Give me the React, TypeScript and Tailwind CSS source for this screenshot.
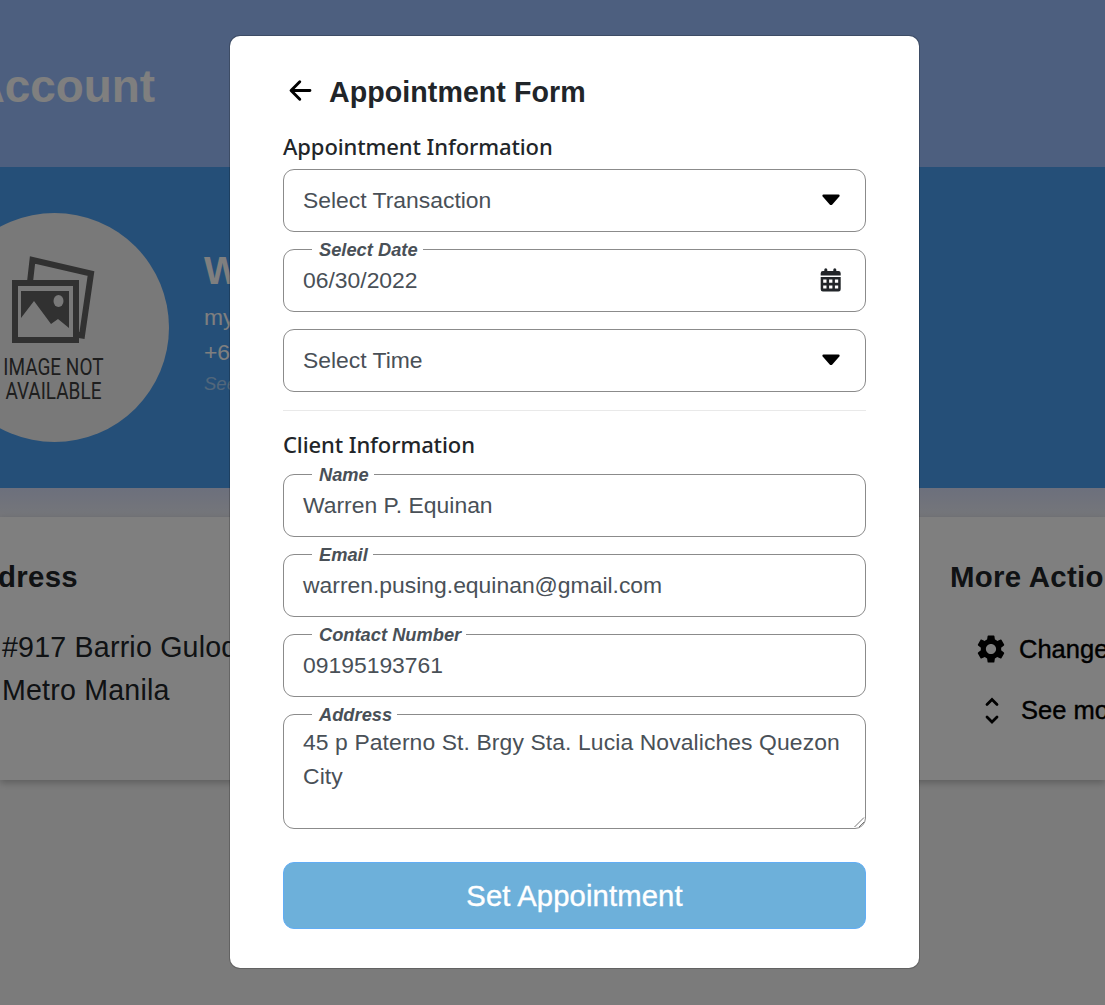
import type { ReactNode } from "react";
import { IoArrowBack } from "react-icons/io5";
import { MdSettings } from "react-icons/md";

function Caret() {
  return (
    <svg width="18" height="12" viewBox="0 0 18 12" className="mr-[2px] mb-[2px] shrink-0 fill-black">
      <path d="M1.500 0.500 H16.500 Q18.200 0.800 17.300 2.400 L10.300 10.500 Q9 11.700 7.700 10.500 L0.700 2.400 Q-0.200 0.800 1.500 0.500 Z" />
    </svg>
  );
}

function Calendar() {
  return (
    <svg width="22" height="24" viewBox="0 0 22 24" className="mb-px shrink-0 fill-[#212529]">
      <path d="M4.300 3 V1.800 Q4.300 0.300 5.800 0.300 T7.300 1.800 V3 H13.300 V1.800 Q13.300 0.300 14.800 0.300 T16.300 1.800 V3 H18.500 Q20.700 3 20.700 5.200 V7.600 H0.700 V5.200 Q0.700 3 2.900 3 Z" />
      <path
        fillRule="evenodd"
        d="M0.700 9 H20.700 V21.300 Q20.700 23.500 18.500 23.500 H2.900 Q0.700 23.500 0.700 21.300 Z M3.200 11.600 V14.700 H6.500 V11.600 Z M9.100 11.600 V14.700 H12.400 V11.600 Z M14.900 11.600 V14.700 H18.200 V11.600 Z M3.200 17.400 V20.500 H6.500 V17.400 Z M9.100 17.400 V20.500 H12.400 V17.400 Z M14.900 17.400 V20.500 H18.200 V17.400 Z"
      />
    </svg>
  );
}

function Field({ label, value, icon }: { label?: string; value: string; icon?: ReactNode }) {
  return (
    <div className="relative flex h-[63px] items-center justify-between rounded-[11px] border-[1.5px] border-[#8b8b8b] pl-[19px] pr-[23px] text-[22.9px] text-[#495057]">
      {label && <FieldLabel text={label} />}
      <span className="mb-[2px] whitespace-nowrap leading-[34px]">{value}</span>
      {icon}
    </div>
  );
}

function FieldLabel({ text }: { text: string }) {
  return (
    <span className="absolute -top-[12px] left-[28px] whitespace-nowrap bg-white pl-[7px] pr-[5px] text-[18.3px] font-bold italic leading-[24px] text-[#495057]">
      {text}
    </span>
  );
}

function Placeholder() {
  return (
    <div className="-ml-[60px] flex h-[229px] w-[229px] shrink-0 flex-col items-center rounded-full bg-[#f2f2f2] pt-[43px]">
      <svg width="84" height="88" viewBox="0 0 84 88" fill="none" className="mr-[2px] shrink-0">
        <path d="M18 26 L20.500 4 L79 17.500 L70 79.500 L64 78.500" stroke="#626262" strokeWidth="6" />
        <rect x="3" y="27" width="61" height="57" fill="#f2f2f2" stroke="#626262" strokeWidth="6" />
        <path d="M9 35 H57 V72 L46 63 L39 68 L22 45 L9 62 Z" fill="#626262" />
        <ellipse cx="46.500" cy="45" rx="5" ry="6" fill="#f2f2f2" />
      </svg>
      <div className="mr-[2px] mt-[11px] flex origin-top scale-x-[0.79] flex-col items-center whitespace-nowrap font-['Roboto'] text-[24px] leading-[24px] text-[#3c3c3c]">
        <span>IMAGE NOT</span>
        <span>AVAILABLE</span>
      </div>
    </div>
  );
}

function AccountPage() {
  return (
    <div className="flex h-[1005px] flex-col bg-[#f7f7f7] text-[#212529]">
      <header className="flex h-[167px] w-full bg-[#9abeff]">
        <h1 className="flex w-[155px] justify-end whitespace-nowrap pt-[52px] text-[45.8px] font-bold leading-[69px] text-white">
          My Account
        </h1>
      </header>
      <section className="flex h-[321px] items-start bg-[#4a9ef0] pt-[46px] text-white">
        <Placeholder />
        <div className="ml-[35px] flex flex-col whitespace-nowrap pt-[33px]">
          <span className="text-[39px] font-bold leading-[50px]">Warren</span>
          <span className="mt-[4px] text-[22.9px] leading-[34px]">my@gmail.com</span>
          <span className="text-[22.9px] leading-[36px]">+63</span>
          <span className="text-[18.5px] italic leading-[28px] text-white/50">See more</span>
        </div>
      </section>
      <div className="h-[29px] bg-linear-to-b from-[#d9e0fa] to-[#ebedf4]" />
      <section className="flex h-[263px] justify-between bg-white pt-[40px] shadow-[0_3px_7px_rgba(0,0,0,0.24)]">
        <div className="w-[500px]">
          <h2 className="flex w-[78px] justify-end text-[29.4px] font-bold leading-[40px] tracking-[0.3px]">Address</h2>
          <p className="ml-[2px] mt-[29px] whitespace-nowrap text-[28.6px] leading-[42.5px] tracking-[0.2px]">
            #917 Barrio Gulod
            <br />
            Metro Manila
          </p>
        </div>
        <div className="w-[155px] overflow-hidden whitespace-nowrap text-black">
          <h2 className="text-[29.4px] font-bold leading-[40px] tracking-[0.3px] text-[#212529]">More Actions</h2>
          <div className="ml-[24px] mt-[34px] flex h-[36px] items-center gap-[11px] text-[25.5px] [-webkit-text-stroke:0.4px_black]">
            <MdSettings size={34} className="shrink-0" />
            <span>Change</span>
          </div>
          <div className="ml-[35px] mt-[25px] flex h-[36px] items-center gap-[22px] text-[25.5px] [-webkit-text-stroke:0.4px_black]">
            <svg width="14" height="27" viewBox="0 0 14 27" fill="none" stroke="currentColor" strokeWidth="2.8" strokeLinecap="round" className="shrink-0">
              <path d="M2 7.500 7 2.500 12 7.500M2 20 7 25 12 20" />
            </svg>
            <span>See more</span>
          </div>
        </div>
      </section>
    </div>
  );
}

function AppointmentModal() {
  return (
    <div className="absolute inset-0 flex items-start bg-black/50 pl-[230px] pt-[36px]">
      <div className="h-[932px] w-[689px] rounded-[10px] bg-white px-[53px] shadow-[0_0_0_1px_rgba(0,0,0,0.2)]">
        <div className="flex h-[112px] items-center gap-[13px] pl-[2px]">
          <IoArrowBack size={31} className="mb-[3px] shrink-0 text-black" />
          <h2 className="text-[28.6px] font-bold leading-[40px] tracking-[0.06px] text-[#212529]">Appointment Form</h2>
        </div>
        <h3 className="-mt-[17px] h-[38px] font-['Noto_Sans'] text-[22px] font-medium leading-[30px] tracking-[-0.1px] text-[#212529]">
          Appointment Information
        </h3>
        <div className="flex flex-col gap-[17px]">
          <Field value="Select Transaction" icon={<Caret />} />
          <Field label="Select Date" value="06/30/2022" icon={<Calendar />} />
          <Field value="Select Time" icon={<Caret />} />
        </div>
        <hr className="mt-[18px] border-[#e9e9e9]" />
        <h3 className="h-[63px] pt-[18px] font-['Noto_Sans'] text-[22px] font-medium leading-[30px] tracking-[-0.1px] text-[#212529]">
          Client Information
        </h3>
        <div className="flex flex-col gap-[17px]">
          <Field label="Name" value="Warren P. Equinan" />
          <Field label="Email" value="warren.pusing.equinan@gmail.com" />
          <Field label="Contact Number" value="09195193761" />
          <div className="relative h-[115px] rounded-[11px] border-[1.5px] border-[#8b8b8b] pl-[19px] pt-[10px] text-[22.9px] leading-[34.4px] text-[#495057]">
            <FieldLabel text="Address" />
            <p className="whitespace-nowrap tracking-[0.1px]">
              45 p Paterno St. Brgy Sta. Lucia Novaliches Quezon
              <br />
              City
            </p>
            <svg width="11" height="11" viewBox="0 0 11 11" fill="none" stroke="#777" className="absolute bottom-0 right-0">
              <path d="M0.500 10 10 0.500M5 10 10 5" />
            </svg>
          </div>
        </div>
        <button className="mt-[33px] h-[67px] w-full rounded-[11px] border-[1.5px] border-[#61adf5] bg-[#6db0da] pt-[3px] text-[29.2px] tracking-[0.15px] text-white [-webkit-text-stroke:0.4px_white]">
          Set Appointment
        </button>
      </div>
    </div>
  );
}

export default function App() {
  return (
    <main className="relative h-[1005px] w-full overflow-hidden font-['Liberation_Sans',Arial,sans-serif]">
      <AccountPage />
      <AppointmentModal />
    </main>
  );
}
